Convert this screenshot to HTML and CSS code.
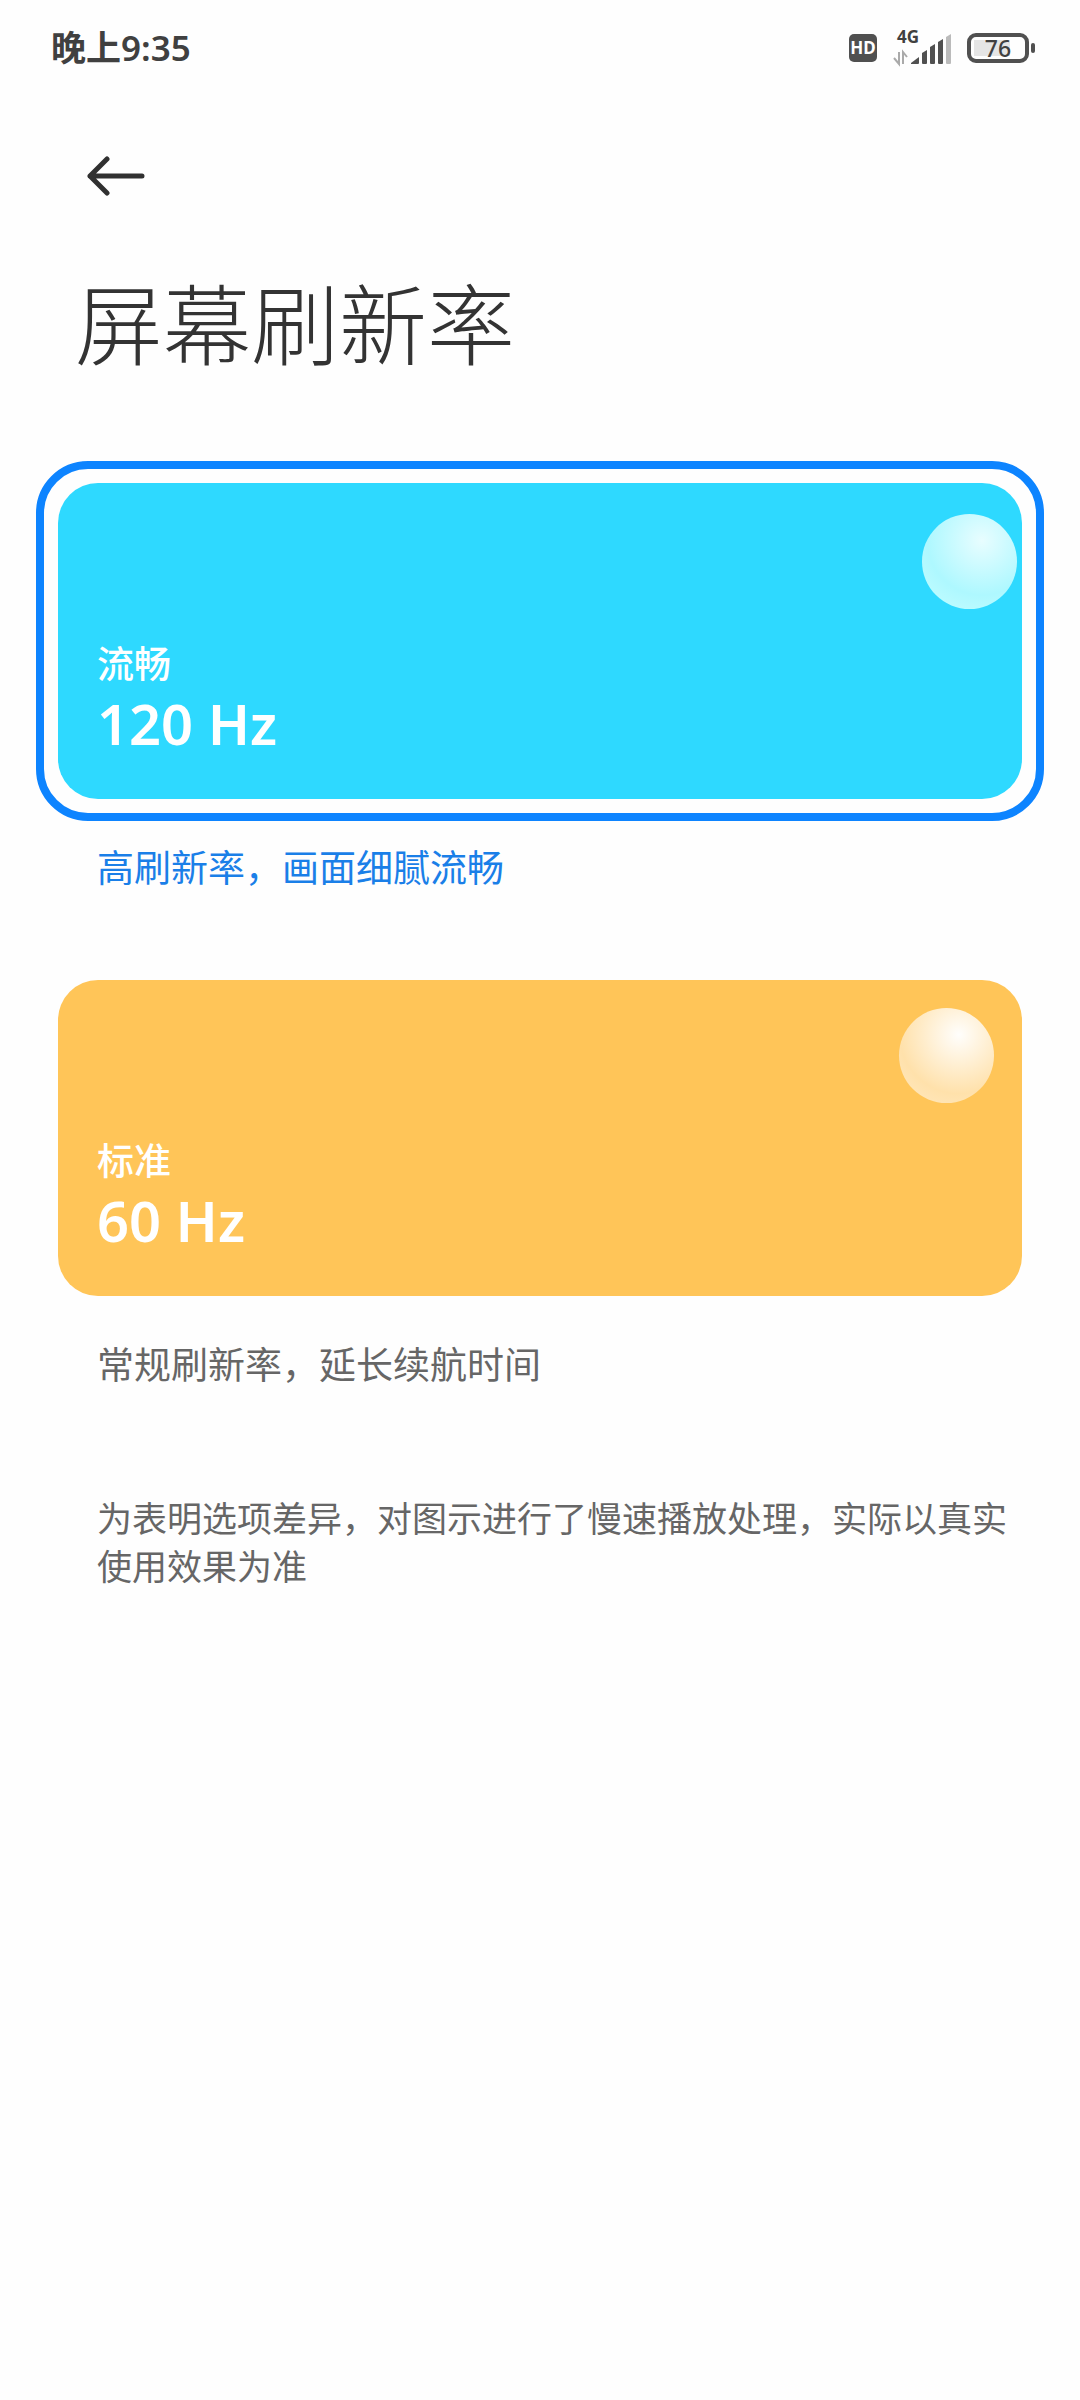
FILE: index.html
```html
<!DOCTYPE html>
<html lang="zh-CN">
<head>
    <meta charset="UTF-8">
    <meta name="viewport" content="width=device-width, initial-scale=1.0">
    <title>屏幕刷新率</title>
    <link rel="stylesheet" href="styles.css">
</head>
<body>

    <!-- Status bar -->
    <div class="status-bar">
        <span class="clock">晚上9:35</span>
        <div class="status-icons">
            <span class="hd">HD</span>
            <svg class="signal" width="58" height="50" viewBox="0 -8 58 50" aria-hidden="true">
                <text class="network" x="4" y="12">4G</text>
                <path d="M6 21v12L1 27M10 33V21l4 5" fill="none" stroke="#aaa" stroke-width="2"/>
                <path d="M18 33v-1l8-6v6q0 1-1 1z" fill="#505050"/>
                <path d="M29 32v-10l5-3v13q0 1-1 1h-3q-1 0-1-1z" fill="#505050"/>
                <path d="M37 32v-16l5-3v19q0 1-1 1h-3q-1 0-1-1z" fill="#505050"/>
                <path d="M45 32v-21l5-3v24q0 1-1 1h-3q-1 0-1-1z" fill="#505050"/>
                <path d="M53 32v-26l5-3v29q0 1-1 1h-3q-1 0-1-1z" fill="#bbb"/>
            </svg>
            <div class="battery">
                <span class="battery-body">76</span>
                <span class="battery-tip"></span>
            </div>
        </div>
    </div>

    <header class="header">
        <button class="back" type="button" aria-label="返回">
            <svg width="58" height="40" viewBox="0 0 58 40" fill="none" stroke="#303030" stroke-width="5" stroke-linecap="round" stroke-linejoin="round">
                <path d="M55 20H3M20 3L3 20l17 17"/>
            </svg>
        </button>
        <h1 class="title">屏幕刷新率</h1>
    </header>

    <!-- Refresh rate options -->
    <main class="options">
        <label class="option">
            <input class="option-input" type="radio" name="rate" value="120" checked>
            <span class="ring">
                <span class="card card-smooth">
                    <span class="ball ball-smooth"></span>
                    <span class="card-name">流畅</span>
                    <span class="card-rate">120 Hz</span>
                </span>
            </span>
            <span class="option-text">高刷新率，画面细腻流畅</span>
        </label>

        <label class="option">
            <input class="option-input" type="radio" name="rate" value="60">
            <span class="ring">
                <span class="card card-standard">
                    <span class="ball ball-standard"></span>
                    <span class="card-name">标准</span>
                    <span class="card-rate">60 Hz</span>
                </span>
            </span>
            <span class="option-text">常规刷新率，延长续航时间</span>
        </label>

        <p class="note">为表明选项差异，对图示进行了慢速播放处理，实际以真实使用效果为准</p>
    </main>

</body>
</html>
```

FILE: styles.css
```css
* {
    box-sizing: border-box;
}
body {
    margin: 0;
    background-color: #fefefe;
    color: #333;
    font-family: "Noto Sans", "Noto Sans CJK SC", sans-serif;
}

/* Status bar */
.status-bar {
    display: flex;
    justify-content: space-between;
    align-items: center;
    height: 96px;
    padding: 0 45px 0 51px;
}
.clock {
    color: #404040;
    font-size: 35px;
    font-weight: 600;
    line-height: 48px;
}
.status-icons {
    display: flex;
    align-items: center;
    gap: 16px;
}
.hd {
    width: 28px;
    height: 28px;
    border-radius: 5px;
    background-color: #505050;
    color: #fff;
    font-size: 17px;
    font-weight: 700;
    line-height: 28px;
    text-align: center;
}
.network {
    fill: #404040;
    font-size: 17px;
    font-weight: 700;
}
.battery {
    display: flex;
    align-items: center;
    gap: 2px;
}
.battery-body {
    width: 62px;
    height: 30px;
    border: 4px solid #505050;
    border-radius: 9px;
    background: linear-gradient(#e5e5e5, #e5e5e5) 3px center / 36px 16px no-repeat;
    color: #404040;
    font-size: 23px;
    font-weight: 500;
    line-height: 22px;
    text-align: center;
}
.battery-tip {
    width: 4px;
    height: 10px;
    border-radius: 2px;
    background-color: #505050;
}

/* Header */
.header {
    padding: 60px 75px 0;
}
.back {
    display: block;
    margin: 0 0 0 12px;
    padding: 0;
    border: none;
    background: none;
    cursor: pointer;
}
.back svg {
    display: block;
}
.title {
    margin: 60px 0 0;
    font-family: "Noto Sans CJK SC", sans-serif;
    font-size: 88px;
    font-weight: 300;
    line-height: 128px;
}

/* Options */
.options {
    padding: 77px 36px 0;
}
.option {
    display: block;
    margin-bottom: 66px;
    cursor: pointer;
}
.option-input {
    position: absolute;
    opacity: 0;
}
.ring {
    display: block;
    padding: 14px;
    border: 8px solid transparent;
    border-radius: 52px;
}
.option-input:checked + .ring {
    border-color: #0d84ff;
}
.card {
    display: flex;
    flex-direction: column;
    height: 316px;
    padding: 0 39px 40px;
    border-radius: 40px;
    color: #fff;
}
.card-smooth {
    background-color: #2ed9ff;
}
.card-standard {
    background-color: #ffc558;
}
.card-name {
    margin-top: auto;
    font-size: 37px;
    font-weight: 500;
    line-height: 46px;
}
.card-rate {
    font-size: 56px;
    font-weight: 600;
    line-height: 72px;
}
.ball {
    align-self: flex-end;
    width: 95px;
    height: 95px;
    border-radius: 50%;
}
.ball-smooth {
    margin: 31px -34px 0 0;
    background: radial-gradient(circle at 63% 28%, #e8fdff, #aef8ff 60%, #c8feff);
}
.ball-standard {
    margin: 28px -11px 0 0;
    background: radial-gradient(circle at 63% 28%, #fffefc, #ffe1ab 65%, #ffeac4);
}
.option-text {
    display: block;
    margin-top: 23px;
    padding: 0 61px;
    color: #666;
    font-size: 37px;
    line-height: 48px;
}
.option-input:checked ~ .option-text {
    color: #1a7fe8;
}
.note {
    margin: 106px 0 0;
    padding: 0 31px 0 61px;
    color: #666;
    font-size: 35px;
    line-height: 48px;
}
```
